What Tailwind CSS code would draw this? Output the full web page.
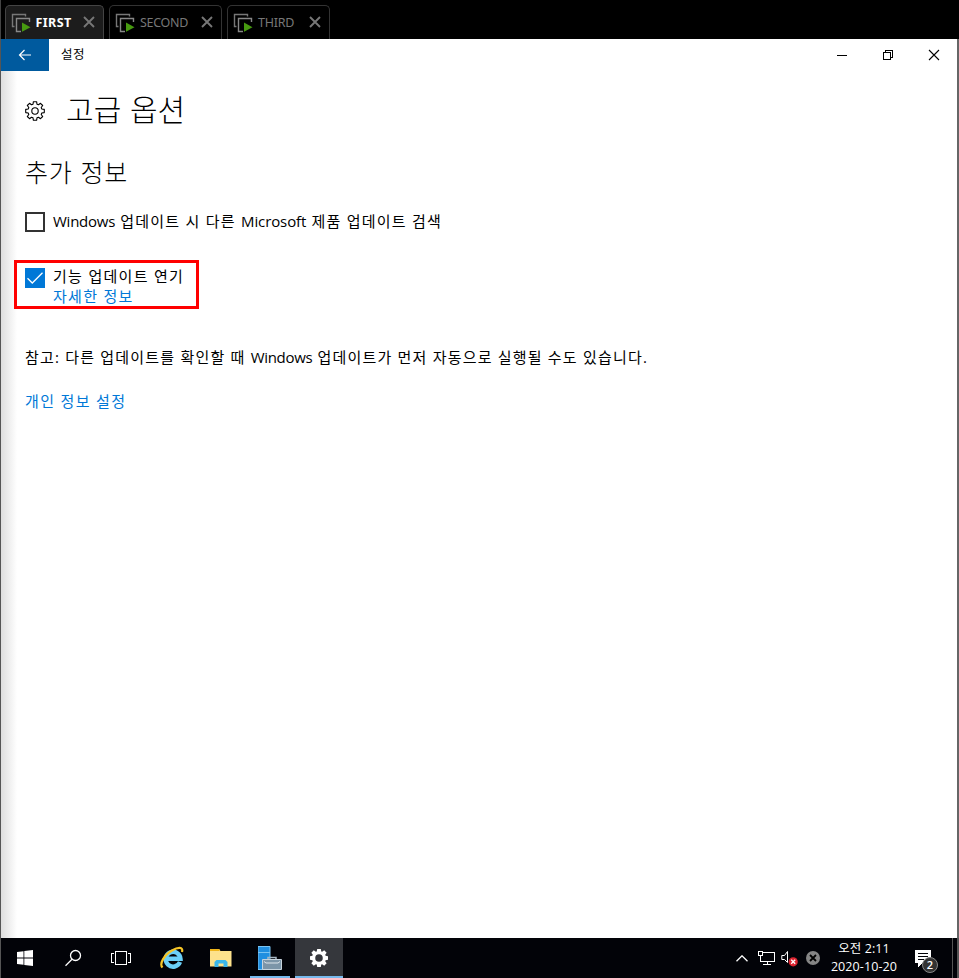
<!DOCTYPE html>
<html lang="ko">
<head>
<meta charset="utf-8">
<title>설정</title>
<script src="https://cdn.jsdelivr.net/npm/@tailwindcss/browser@4"></script>
</head>
<body class="w-[959px] h-[978px] overflow-hidden bg-black flex flex-col font-['Open_Sans','Noto_Sans_CJK_KR',sans-serif]">
<svg class="hidden">
  <symbol id="vm" viewBox="0 0 20 20">
    <path d="M3.500 13.500H1.500V1.500H14.500V3.500" fill="none" stroke="#777" stroke-width="1.400"/>
    <path d="M10 18.500H5.500V5.500H18.500V9" fill="none" stroke="#888" stroke-width="1.400"/>
    <path d="M11 9.500L19.500 14.200L11 18.800Z" fill="#479a10"/>
  </symbol>
  <symbol id="close" viewBox="0 0 12 12"><path d="M1 1L11 11M11 1L1 11" stroke="#777" stroke-width="1.900" fill="none"/></symbol>
</svg>

<header class="h-[39px] shrink-0 pl-[5px] pt-[5px] flex gap-[5px] border-l border-[#444] text-[12px] text-[#777]">
  <div class="-ml-px w-[99px] h-[34px] border border-b-0 border-[#444] rounded-t-[5px] bg-[#1c1c1c] flex items-center pl-[5px]">
    <svg class="w-5 h-5"><use href="#vm"/></svg>
    <span class="ml-[4.500px] w-[43px] font-['Noto_Sans'] font-bold text-white text-[12.500px] leading-[18px] tracking-[.4px]">FIRST</span>
    <svg class="ml-[4.500px] w-3 h-3 -mt-[2px]"><use href="#close"/></svg>
  </div>
  <div class="w-[113px] h-[34px] border border-b-0 border-[#333] rounded-t-[5px] flex items-center pl-[5px]">
    <svg class="w-5 h-5"><use href="#vm"/></svg>
    <span class="ml-[5px] w-[56px] font-['Noto_Sans'] text-[12.500px] leading-[18px] tracking-[-.3px]">SECOND</span>
    <svg class="ml-[5px] w-3 h-3 -mt-[2px]"><use href="#close"/></svg>
  </div>
  <div class="w-[103px] h-[34px] border border-b-0 border-[#333] rounded-t-[5px] flex items-center pl-[5px]">
    <svg class="w-5 h-5"><use href="#vm"/></svg>
    <span class="ml-[5px] w-[46px] font-['Noto_Sans'] text-[12.500px] leading-[18px] tracking-[-.25px]">THIRD</span>
    <svg class="ml-[5px] w-3 h-3 -mt-[2px]"><use href="#close"/></svg>
  </div>
</header>

<main class="h-[899px] shrink-0 bg-white border-l border-l-[#555] border-r-2 border-r-[#666] flex flex-col">
  <div class="h-8 shrink-0 flex items-center">
    <div class="w-12 h-8 bg-[#005a9e] flex items-center justify-center">
      <svg class="w-[14px] h-[12px]" viewBox="0 0 14 12"><path d="M13 6H1.500M6.500 1L1.500 6L6.500 11" fill="none" stroke="#fff" stroke-width="1.200"/></svg>
    </div>
    <span class="ml-3 text-[12.500px] leading-[20px] text-black tracking-[.4px]">설정</span>
    <div class="ml-auto flex">
      <div class="w-[46px] flex justify-center"><svg class="w-3 h-3" viewBox="0 0 12 12" shape-rendering="crispEdges"><path d="M1 6.500H11" stroke="#000"/></svg></div>
      <div class="w-[46px] flex justify-center"><svg class="w-3 h-3" viewBox="0 0 12 12" shape-rendering="crispEdges"><path d="M1.500 3.500H8.500V10.500H1.500ZM3.500 3.500V1.500H10.500V8.500H8.500" fill="none" stroke="#000"/></svg></div>
      <div class="w-[46px] flex justify-center"><svg class="w-3 h-3" viewBox="0 0 12 12"><path d="M1 1L11 11M11 1L1 11" stroke="#000" stroke-width="1.100"/></svg></div>
    </div>
  </div>

  <div class="flex-1 bg-linear-to-r from-[#dedede] to-white to-[16px] pl-6 flex flex-col items-start text-[15px] leading-5 text-black">
    <div class="mt-[18px] h-[44px] flex items-center">
      <svg class="w-5 h-5" viewBox="0 0 20 20" fill="none" stroke="#000" stroke-width="1.100" stroke-linejoin="round"><path d="M8.400 .7H11.600L12 3.200L13.500 3.800L15.500 2.300L17.700 4.500L16.200 6.500L16.800 8L19.300 8.400V11.600L16.800 12L16.200 13.500L17.700 15.500L15.500 17.700L13.500 16.200L12 16.800L11.600 19.300H8.400L8 16.800L6.500 16.200L4.500 17.700L2.300 15.500L3.800 13.500L3.200 12L.7 11.600V8.400L3.200 8L3.800 6.500L2.300 4.500L4.500 2.300L6.500 3.800L8 3.200Z"/><circle cx="10" cy="10" r="3.200"/></svg>
      <h1 class="ml-[21px] mb-[5px] font-['Noto_Sans_CJK_KR'] font-light text-[30px] leading-[39px] tracking-[.1px] whitespace-nowrap">고급 옵션</h1>
    </div>
    <h2 class="mt-[21px] font-['Noto_Sans_CJK_KR'] font-light text-[25px] leading-[34px] tracking-[.8px] whitespace-nowrap">추가 정보</h2>
    <label class="mt-[24px] h-5 flex items-center">
      <span class="w-5 h-5 border-2 border-[#333]"></span>
      <span class="ml-2 -mt-[2px] whitespace-nowrap tracking-[1.250px]"><span class="tracking-[-.25px]">Windows</span> 업데이트 시 다른 <span class="tracking-[-.1px]">Microsoft</span> 제품 업데이트 검색</span>
    </label>
    <div class="-ml-[11px] mt-[28px] w-[185px] h-[49px] border-3 border-[#f00] flex pl-2 pt-1">
      <span class="mt-px w-5 h-5 bg-[#0078d7] shrink-0"><svg class="w-5 h-5" viewBox="0 0 20 20"><path d="M2.500 10.200L7.300 15L17.500 4.800" fill="none" stroke="#fff" stroke-width="1.300"/></svg></span>
      <div class="ml-2 -mt-px flex flex-col tracking-[1.300px] whitespace-nowrap">
        <span class="leading-5">기능 업데이트 연기</span>
        <span class="leading-[21px] text-[#0078d7]">자세한 정보</span>
      </div>
    </div>
    <p class="mt-[38px] whitespace-nowrap tracking-[1.200px]">참고: 다른 업데이트를 확인할 때 <span class="tracking-[-.3px]">Windows</span> 업데이트가 먼저 자동으로 실행될 수도 있습니다.</p>
    <a class="mt-[24px] whitespace-nowrap tracking-[1.350px] text-[#0078d7]">개인 정보 설정</a>
  </div>
</main>

<footer class="h-10 shrink-0 bg-[#020308] border-l border-l-[#555] border-r-2 border-r-[#555] flex text-white">
  <div class="w-12 flex items-center justify-center"><svg class="w-4 h-4" viewBox="0 0 16 16" fill="#fff"><path d="M0 2L6.500 1.200V7.500H0ZM7.300 1.100L16 0V7.500H7.300ZM0 8.500H6.500V14.800L0 14ZM7.300 8.500H16V16L7.300 14.900Z"/></svg></div>
  <div class="w-12 flex items-center justify-center"><svg class="w-[18px] h-[18px]" viewBox="0 0 18 18" fill="none" stroke="#fff" stroke-width="1.300"><circle cx="11.500" cy="6.500" r="5"/><path d="M8 10.200L1.500 16.800"/></svg></div>
  <div class="w-12 flex items-center justify-center"><svg class="w-5 h-4" viewBox="0 0 20 16" fill="none" stroke="#fff" shape-rendering="crispEdges"><path d="M4.500 1.500H15.500V14.500H4.500ZM3 3.500H.5V12.500H3M17 3.500H19.500V12.500H17"/></svg></div>
  <div class="w-[54px] flex items-center justify-center"><svg class="w-6 h-6" viewBox="0 0 24 24">
    <path d="M20 16A7.400 7.400 0 1 1 20.500 12.800H7" fill="none" stroke="#6bd0f8" stroke-width="4.400"/>
    <path d="M2.500 21.500C-1 18 4 9 12 4.500C18 1 23.500 .5 22 6" fill="none" stroke="#f6c527" stroke-width="2.200"/></svg></div>
  <div class="w-[44px] flex items-center justify-center"><svg class="w-[22px] h-[18px]" viewBox="0 0 22 18"><path d="M0 0H9L10.500 2H21.500V17.500H0Z" fill="#fde28c"/><path d="M0 0H9.500V2H0Z" fill="#efb51b"/><path d="M4.500 18V13L6.500 11H15.500L17.500 13V18H13.500V14.500H8.500V18Z" fill="#3cb7ea"/></svg></div>
  <div class="ml-[7px] w-10 flex flex-col items-center border-b-2 border-[#76b9ed]"><svg class="mt-2 w-6 h-6" viewBox="0 0 24 24"><path d="M0 0H12V24H0Z" fill="#218fe0"/><path d="M0 .5H12V23.500H0ZM0 6.500H12" fill="none" stroke="#7bc4f2"/><path d="M10 14V11.500H18V14" fill="none" stroke="#a8b8c4" stroke-width="1.500"/><path d="M4.500 13.500H23.500V23.500H4.500Z" fill="#7c95a8" stroke="#c6d3dc"/><path d="M6 15.500L8 17H20L22 15.500" fill="none" stroke="#dce4ea"/></svg></div>
  <div class="ml-[5px] w-12 bg-[#35373c] border-b-2 border-[#76b9ed] flex flex-col items-center"><svg class="mt-[11px] w-[18px] h-[18px]" viewBox="0 0 20 20"><path fill="#fff" fill-rule="evenodd" d="M8 0H12L12.500 2.700L13.500 3.100L15.800 1.500L18.500 4.200L16.900 6.500L17.300 7.500L20 8V12L17.300 12.500L16.900 13.500L18.500 15.800L15.800 18.500L13.500 16.900L12.500 17.300L12 20H8L7.500 17.300L6.500 16.900L4.200 18.500L1.500 15.800L3.100 13.500L2.700 12.500L0 12V8L2.700 7.500L3.100 6.500L1.500 4.200L4.200 1.500L6.500 3.100L7.500 2.700ZM10 5.800A4.200 4.200 0 1 0 10 14.200A4.200 4.200 0 1 0 10 5.800Z"/></svg></div>
  <div class="ml-auto flex">
    <div class="flex items-center">
      <svg class="w-3 h-[7px]" viewBox="0 0 12 7"><path d="M.5 6.300L6 .8L11.500 6.300" fill="none" stroke="#fff" stroke-width="1.300"/></svg>
      <svg class="ml-[10px] w-[17px] h-[14px]" viewBox="0 0 17 14" fill="none" stroke="#fff" shape-rendering="crispEdges"><path d="M5 1.500H16.500V10.500H2.500V5M9.500 10.500V13M5 13.500H13M.5 .5H4.500V4.500H.5Z"/></svg>
      <svg class="ml-[6px] w-[17px] h-[17px]" viewBox="0 0 17 17"><path d="M6.500 1.500V12.500L3.500 9.500H.8V5.500H3.500Z" fill="none" stroke="#fff"/><circle cx="12.200" cy="11.800" r="4.600" fill="#dc2430"/><path d="M10.200 9.800L14.200 13.800M14.200 9.800L10.200 13.800" stroke="#fff" stroke-width="1.300"/></svg>
      <svg class="ml-[8px] w-[14px] h-[14px]" viewBox="0 0 14 14"><circle cx="7" cy="7" r="7" fill="#858585"/><path d="M4 4L10 10M10 4L4 10" stroke="#000" stroke-width="1.800"/></svg>
    </div>
    <div class="ml-[10px] w-[68px] pt-[2px] flex flex-col items-center text-[12.500px] leading-[18px] tracking-[.1px] whitespace-nowrap">
      <span>오전 2:11</span><span>2020-10-20</span>
    </div>
    <div class="relative ml-[17px] w-[38px] border-r border-[#555]">
      <svg class="mt-3 w-4 h-[17px]" viewBox="0 0 16 17" shape-rendering="crispEdges"><path d="M0 0H16V13H7L3 17V13H0Z" fill="#fff"/><path d="M3 3.500H13M3 6.500H13M3 9.500H9" stroke="#020308"/></svg>
      <span class="absolute left-[7px] top-[19px] w-4 h-4 rounded-full bg-[#333] border border-[#888] text-[11px] leading-[14px] font-semibold text-center">2</span>
    </div>
    <div class="w-1"></div>
  </div>
</footer>
</body>
</html>
